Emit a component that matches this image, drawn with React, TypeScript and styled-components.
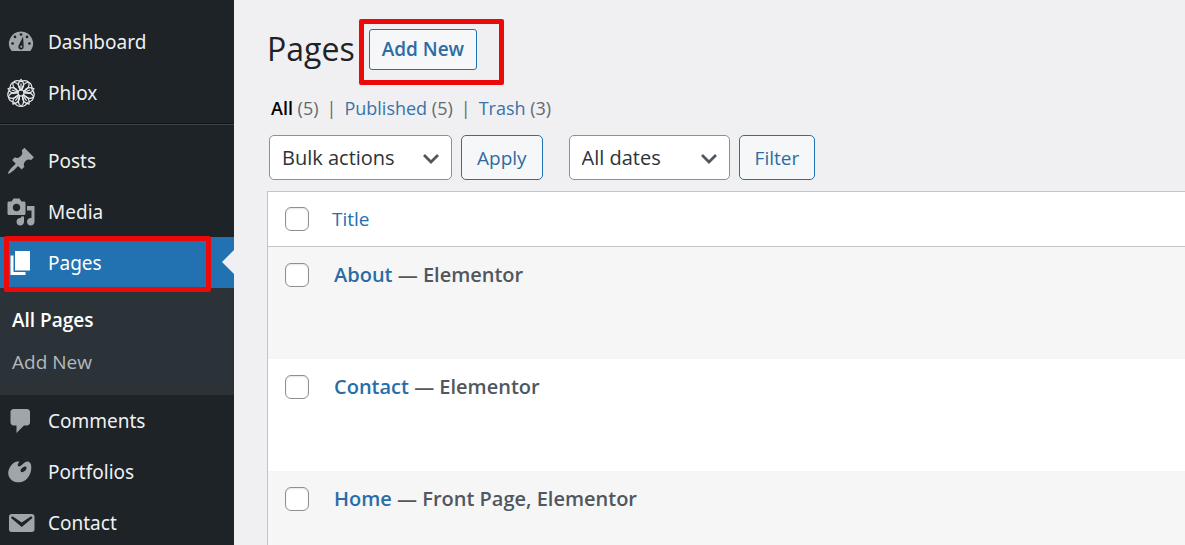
import React from "react";
import styled, { createGlobalStyle, css } from "styled-components";

const GlobalStyle = createGlobalStyle`
  *, *::before, *::after { box-sizing: border-box; }
  body {
    margin: 0;
    background: #f0f0f2;
    color: #3c434a;
    font-family: "Open Sans", "Noto Sans", sans-serif;
    font-size: 19px;
    line-height: 28px;
  }
  button, select, input { font: inherit; margin: 0; }
  a { text-decoration: none; }
`;

const Shell = styled.div`
  display: flex;
  height: 100vh;
  overflow: hidden;
`;

const Sidebar = styled.nav`
  flex: 0 0 234px;
  padding-top: 16px;
  background: #1d2327;
`;

const MenuList = styled.ul`
  list-style: none;
  margin: 0;
  padding: 0;
`;

const MenuItem = styled.li`
  position: relative;
`;

const MenuLink = styled.a<{ $current?: boolean }>`
  position: relative;
  display: flex;
  align-items: center;
  gap: 12px;
  height: 51px;
  padding-left: 6px;
  font-family: "Noto Sans", "Open Sans", sans-serif;
  color: ${(p) => (p.$current ? "#fff" : "#f0f0f1")};
  background: ${(p) => (p.$current ? "#2271b1" : "transparent")};

  svg {
    width: 30px;
    height: 30px;
    fill: ${(p) => (p.$current ? "#fff" : "#a0a5aa")};
  }

  ${(p) =>
    p.$current &&
    css`
      &::after {
        content: "";
        position: absolute;
        right: 0;
        top: 13px;
        border: 12px solid transparent;
        border-left-width: 0;
        border-right-color: #f0f0f2;
      }
    `}
`;

const Separator = styled.li`
  height: 17px;
  padding-top: 5px;

  &::before {
    content: "";
    display: block;
    height: 2px;
    border-top: 1px solid #101517;
    border-bottom: 1px solid #3c434a;
  }
`;

const Submenu = styled.ul`
  list-style: none;
  margin: 0;
  padding: 11px 12px 12px;
  background: #2c3338;
`;

const SubmenuLink = styled.a<{ $current?: boolean }>`
  display: flex;
  align-items: center;
  height: 42px;
  font-weight: ${(p) => (p.$current ? 600 : 400)};
  color: ${(p) => (p.$current ? "#fff" : "#b4b9be")};
`;

const Main = styled.main`
  flex: 1;
  min-width: 0;
  padding: 27px 0 0 33px;
`;

const HeadingRow = styled.header`
  display: flex;
  align-items: center;
  gap: 14px;
  height: 44px;
`;

const Heading = styled.h1`
  margin: 0;
  font-size: 32px;
  line-height: 44px;
  font-weight: 400;
  color: #1d2327;
`;

const ActionWrap = styled.div`
  position: relative;
`;

const Callout = styled.span<{ $inset: string }>`
  position: absolute;
  z-index: 2;
  inset: ${(p) => p.$inset};
  border: 5px solid #ec0909;
  border-radius: 2px;
  pointer-events: none;
`;

const Button = styled.button<{ $compact?: boolean }>`
  height: ${(p) => (p.$compact ? 41 : 45)}px;
  padding: 0 ${(p) => (p.$compact ? 12 : 15)}px;
  border: 1px solid #2271b1;
  border-radius: ${(p) => (p.$compact ? 3 : 5)}px;
  background: #f6f7f8;
  color: #2c6ca3;
  font-size: 19px;
  font-weight: ${(p) => (p.$compact ? 600 : 400)};
  white-space: nowrap;
`;

const Views = styled.ul`
  display: flex;
  gap: 8px;
  list-style: none;
  margin: 23px 0 0;
  padding: 0 0 0 4px;
  font-size: 18px;
  color: #646970;
`;

const ViewLink = styled.a<{ $current?: boolean }>`
  color: ${(p) => (p.$current ? "#000" : "#3a73a8")};
  font-weight: ${(p) => (p.$current ? 600 : 400)};
`;

const Toolbar = styled.form`
  display: flex;
  gap: 26px;
  margin: 13px 0 11px 2px;
`;

const FilterGroup = styled.div`
  display: flex;
  gap: 9px;
`;

const SelectBox = styled.label<{ $width: number }>`
  position: relative;
  width: ${(p) => p.$width}px;

  select {
    appearance: none;
    width: 100%;
    height: 45px;
    padding: 0 36px 0 12px;
    border: 1px solid #8c8f94;
    border-radius: 5px;
    background: #fff;
    color: #2c3338;
    font-size: 20px;
  }

  svg {
    position: absolute;
    right: 12px;
    top: 14px;
    width: 18px;
    height: 18px;
    pointer-events: none;
  }
`;

const Table = styled.table`
  width: 100%;
  border: 1px solid #c3c4c7;
  border-right: 0;
  border-spacing: 0;
  background: #fff;
  table-layout: fixed;
`;

const HeadCell = styled.th`
  height: 55px;
  padding: 0 0 0 6px;
  border-bottom: 1px solid #c3c4c7;
  text-align: left;
  font-weight: 400;

  a { color: #2271b1; }
`;

const CheckCell = styled.td<{ $head?: boolean }>`
  width: 58px;
  height: ${(p) => (p.$head ? 55 : 112)}px;
  padding: ${(p) => (p.$head ? "15px" : "16px")} 0 0 17px;
  border-bottom: ${(p) => (p.$head ? "1px solid #c3c4c7" : "0")};
  vertical-align: top;
`;

const BodyRow = styled.tr`
  &:nth-child(odd) { background: #f6f6f7; }
`;

const TitleCell = styled.td`
  padding: 14px 0 0 8px;
  vertical-align: top;
  font-size: 20px;
  font-weight: 600;
  color: #50575e;

  a { color: #2a6da6; }
`;

const Checkbox = styled.input`
  appearance: none;
  display: block;
  width: 24px;
  height: 24px;
  border: 1px solid #8c8f94;
  border-radius: 6px;
  background: #fff;
  box-shadow: inset 0 1px 2px rgba(0, 0, 0, 0.1);
`;

const PATHS = {
  posts:
    "M10.44 3.02l1.82-1.82 6.36 6.35-1.83 1.82c-1.05-.68-2.48-.57-3.41.36l-.75.75c-.92.93-1.04 2.35-.35 3.41l-1.83 1.82-2.41-2.41-2.8 2.79c-.42.42-3.38 2.71-3.8 2.29s1.86-3.39 2.28-3.81l2.79-2.79L4.1 9.36l1.83-1.82c1.05.69 2.48.57 3.4-.36l.75-.75c.93-.92 1.05-2.35.36-3.41z",
  media:
    "M13 11V4c0-.55-.45-1-1-1h-1.67L9 1H5L3.67 3H2c-.55 0-1 .45-1 1v7c0 .55.45 1 1 1h10c.55 0 1-.45 1-1zM7 4.5c1.38 0 2.5 1.12 2.5 2.5S8.38 9.5 7 9.5 4.5 8.38 4.5 7 5.62 4.5 7 4.5zM14 6h5v10.5c0 1.38-1.12 2.5-2.5 2.5S14 17.88 14 16.5s1.12-2.5 2.5-2.5c.17 0 .34.02.5.05V9h-3V6zm-4 8.05V13h2v3.5c0 1.38-1.12 2.5-2.5 2.5S7 17.88 7 16.5 8.12 14 9.5 14c.17 0 .34.02.5.05z",
  pages: "M6 15V2h10v13H6zm-1 1h8v2H3V5h2v11z",
  comments:
    "M5 2h9c1.1 0 2 .9 2 2v7c0 1.1-.9 2-2 2h-2l-5 5v-5H5c-1.1 0-2-.9-2-2V4c0-1.1.9-2 2-2z",
  portfolios:
    "M8.55 3.06c1.01.34-1.95 2.01-.1 3.13 1.04.63 3.31-2.22 4.45-2.86.97-.54 2.67-.65 3.53 1.23 1.09 2.38.14 8.57-3.79 11.06-3.97 2.5-8.97 1.23-10.7-2.66-2.01-4.53 3.12-11.09 6.61-9.9zm1.21 6.45c.73 1.64 4.7-.5 3.79-2.8-.59-1.49-4.48 1.25-3.79 2.8z",
  contact:
    "M3.87 4h13.25C18.37 4 19 4.59 19 5.79v8.42c0 1.19-.63 1.79-1.88 1.79H3.87c-1.25 0-1.88-.6-1.88-1.79V5.79c0-1.2.63-1.79 1.88-1.79zm6.62 8.6l6.74-5.53c.24-.2.43-.66.13-1.07-.29-.41-.82-.42-1.17-.17l-5.7 3.86L4.8 5.83c-.35-.25-.88-.24-1.17.17-.3.41-.11.87.13 1.07z",
};

const PathIcon = ({ name }: { name: keyof typeof PATHS }) => (
  <svg viewBox="0 0 20 20" aria-hidden="true">
    <path fillRule="evenodd" d={PATHS[name]} />
  </svg>
);

const GaugeIcon = () => (
  <svg viewBox="0 0 20 20" aria-hidden="true">
    <path d="M3.76 16h12.48A7.998 7.998 0 0 0 10 3a7.998 7.998 0 0 0-6.24 13z" />
    <g style={{ fill: "#1d2327" }}>
      <circle cx="10" cy="5" r="0.9" />
      <circle cx="6" cy="6.6" r="0.9" />
      <circle cx="14" cy="6.6" r="0.9" />
      <circle cx="4.4" cy="11" r="0.9" />
      <circle cx="15.6" cy="11" r="0.9" />
      <path d="M11.4 6.4l.4 6.8a1.8 1.8 0 1 1-3.4-.8z" />
    </g>
    <circle cx="10.2" cy="13.1" r="0.7" />
  </svg>
);

const FlowerIcon = () => (
  <svg viewBox="0 0 20 20" aria-hidden="true">
    <g style={{ fill: "none", stroke: "#e4e6e8", strokeWidth: 0.8 }}>
      <circle cx="10" cy="10" r="2" />
      {[0, 72, 144, 216, 288].map((angle) => (
        <g key={angle} transform={`rotate(${angle} 10 10)`}>
          <path d="M10 8C7.5 5.8 7.6 3.4 10 .9C12.4 3.4 12.5 5.8 10 8z" />
          <path d="M10 7.2V3.6" />
          <path d="M10 2.4C7.6 1.3 5.8 1.7 4.7 3.1C4.2 5.4 5.3 7.6 8.4 8.8" />
          <path d="M10 2.4C12.4 1.3 14.2 1.7 15.3 3.1C15.8 5.4 14.7 7.6 11.6 8.8" />
        </g>
      ))}
    </g>
  </svg>
);

const Chevron = () => (
  <svg viewBox="0 0 18 18" aria-hidden="true">
    <path d="M2 6l7 7 7-7" fill="none" stroke="#50575e" strokeWidth="2.8" />
  </svg>
);

const rows = [
  { title: "About", state: "Elementor" },
  { title: "Contact", state: "Elementor" },
  { title: "Home", state: "Front Page, Elementor" },
];

const views = [
  { label: "All", count: 5, current: true },
  { label: "Published", count: 5 },
  { label: "Trash", count: 3 },
];

const Entry = ({ label, icon }: { label: string; icon: React.ReactNode }) => (
  <MenuItem>
    <MenuLink href="#">
      {icon}
      {label}
    </MenuLink>
  </MenuItem>
);

export default function App() {
  return (
    <>
      <GlobalStyle />
      <Shell>
        <Sidebar aria-label="Main menu">
          <MenuList>
            <Entry label="Dashboard" icon={<GaugeIcon />} />
            <Entry label="Phlox" icon={<FlowerIcon />} />
            <Separator role="separator" />
            <Entry label="Posts" icon={<PathIcon name="posts" />} />
            <Entry label="Media" icon={<PathIcon name="media" />} />
            <MenuItem>
              <MenuLink href="#" $current>
                <PathIcon name="pages" />
                Pages
                <Callout $inset="-1px 23px -4px 4px" />
              </MenuLink>
              <Submenu>
                <li>
                  <SubmenuLink href="#" $current>All Pages</SubmenuLink>
                </li>
                <li>
                  <SubmenuLink href="#">Add New</SubmenuLink>
                </li>
              </Submenu>
            </MenuItem>
            <Entry label="Comments" icon={<PathIcon name="comments" />} />
            <Entry label="Portfolios" icon={<PathIcon name="portfolios" />} />
            <Entry label="Contact" icon={<PathIcon name="contact" />} />
          </MenuList>
        </Sidebar>
        <Main>
          <HeadingRow>
            <Heading>Pages</Heading>
            <ActionWrap>
              <Button type="button" $compact>Add New</Button>
              <Callout $inset="-10px -27px -15px -10px" />
            </ActionWrap>
          </HeadingRow>
          <Views>
            {views.map((view, i) => (
              <React.Fragment key={view.label}>
                {i > 0 && <li aria-hidden="true">|</li>}
                <li>
                  <ViewLink href="#" $current={view.current}>{view.label}</ViewLink> ({view.count})
                </li>
              </React.Fragment>
            ))}
          </Views>
          <Toolbar onSubmit={(e) => e.preventDefault()}>
            <FilterGroup>
              <SelectBox $width={183}>
                <select aria-label="Bulk actions">
                  <option>Bulk actions</option>
                </select>
                <Chevron />
              </SelectBox>
              <Button type="button">Apply</Button>
            </FilterGroup>
            <FilterGroup>
              <SelectBox $width={161}>
                <select aria-label="Filter by date">
                  <option>All dates</option>
                </select>
                <Chevron />
              </SelectBox>
              <Button type="button">Filter</Button>
            </FilterGroup>
          </Toolbar>
          <Table>
            <thead>
              <tr>
                <CheckCell $head>
                  <Checkbox type="checkbox" aria-label="Select all" />
                </CheckCell>
                <HeadCell scope="col">
                  <a href="#">Title</a>
                </HeadCell>
              </tr>
            </thead>
            <tbody>
              {rows.map((row) => (
                <BodyRow key={row.title}>
                  <CheckCell>
                    <Checkbox type="checkbox" aria-label={`Select ${row.title}`} />
                  </CheckCell>
                  <TitleCell>
                    <a href="#">{row.title}</a> — {row.state}
                  </TitleCell>
                </BodyRow>
              ))}
            </tbody>
          </Table>
        </Main>
      </Shell>
    </>
  );
}
